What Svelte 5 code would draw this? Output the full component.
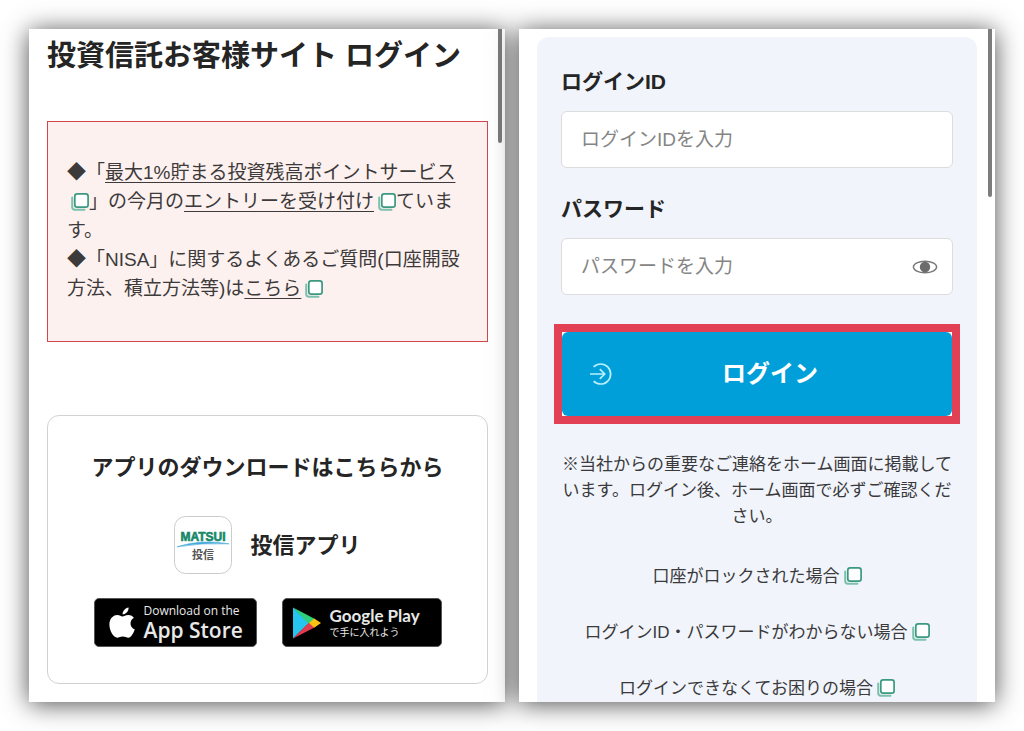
<script lang="ts">
  const helpLinks = [
    '口座がロックされた場合',
    'ログインID・パスワードがわからない場合',
    'ログインできなくてお困りの場合',
  ]

  let loginId = $state('')
  let password = $state('')
  let showPassword = $state(false)
</script>

{#snippet windowIcon()}
  <svg class="window-icon" viewBox="0 0 18 18" aria-hidden="true">
    <path d="M1.2 4.5v9.6q0 2.7 2.7 2.7h9.6" fill="none" stroke="#7cc0ae" stroke-width="2" stroke-linecap="round" />
    <rect x="3.8" y="0.9" width="13.300" height="13.300" rx="2.400" fill="#fff" stroke="#3a9980" stroke-width="1.700" />
  </svg>
{/snippet}

<main class="page">
  <section class="screen intro">
    <div class="scroll-thumb short"></div>
    <h1>投資信託お客様サイト ログイン</h1>

    <div class="notice">
      <p>
        ◆「<a href="#point">最大1%貯まる投資残高ポイントサービス</a>{@render windowIcon()}」の今月の<a href="#entry">エントリーを受け付け</a>{@render windowIcon()}ています。
      </p>
      <p>
        ◆「NISA」に関するよくあるご質問(口座開設方法、積立方法等)は<a href="#faq">こちら</a>{@render windowIcon()}
      </p>
    </div>

    <div class="app-card">
      <h2>アプリのダウンロードはこちらから</h2>
      <div class="app-name">
        <svg class="app-icon" viewBox="0 0 58 58" role="img" aria-label="MATSUI 投信">
          <rect x="0.5" y="0.5" width="57" height="57" rx="11" fill="#fff" stroke="#ccc" />
          <text class="brand" x="29" y="25" text-anchor="middle">MATSUI</text>
          <path d="M3 30.800Q27 22.800 55 27.800Q28 26.600 3 30.800Z" fill="#45a9dc" stroke="#45a9dc" stroke-width="0.600" />
          <text class="product" x="29" y="43" text-anchor="middle">投信</text>
        </svg>
        <span>投信アプリ</span>
      </div>

      <div class="stores">
        <a class="store apple" href="#appstore">
          <svg class="apple-logo" viewBox="0 0 26 32" aria-hidden="true">
            <path d="M19.600 0.500c.2 3.600-2.600 6.800-6 6.900C13.300 4.200 16.300 1 19.600.5Z" fill="#fff" />
            <path d="M13.400 9.400c1.600 0 3-1.500 5.900-1.500 2.500 0 4.500 1.300 5.600 2.900-5 3-4.200 9.700.9 11.700-1.200 3.300-3.600 8.200-6.500 8.200-2 0-2.800-1.200-5.500-1.200s-3.600 1.200-5.500 1.200C4.600 30.700.4 24 .4 17.600c0-6.300 4-9.600 7.900-9.600 2.400 0 4 1.400 5.100 1.400Z" fill="#fff" />
          </svg>
          <span class="store-text">
            <small>Download on the</small>
            <strong>App Store</strong>
          </span>
        </a>
        <a class="store google" href="#googleplay">
          <svg class="play-logo" viewBox="0 0 28 32" aria-hidden="true">
            <path d="M0 .5v31L16 16Z" fill="#25c5ee" />
            <path d="M0 .5 21.500 11.700 16 17Z" fill="#2fd07a" />
            <path d="M0 31.500 16 15.500l5.500 5Z" fill="#e23b4e" />
            <path d="M21.200 11.500 28 16l-6.800 4.800L16 16Z" fill="#fcc315" />
          </svg>
          <span class="store-text">
            <strong>Google Play</strong>
            <small>で手に入れよう</small>
          </span>
        </a>
      </div>
    </div>
  </section>

  <section class="screen login">
    <div class="scroll-thumb long"></div>
    <form class="login-card" onsubmit={(e) => e.preventDefault()}>
      <label for="login-id">ログインID</label>
      <div class="field">
        <input id="login-id" type="text" placeholder="ログインIDを入力" bind:value={loginId} />
      </div>

      <label for="password">パスワード</label>
      <div class="field">
        <input
          id="password"
          type={showPassword ? 'text' : 'password'}
          placeholder="パスワードを入力"
          bind:value={password}
        />
        <button
          class="eye"
          type="button"
          aria-label="パスワードを表示"
          onclick={() => (showPassword = !showPassword)}
        >
          <svg viewBox="0 0 26 14" aria-hidden="true">
            <ellipse cx="13" cy="7" rx="11.600" ry="5.800" fill="none" stroke="#777" stroke-width="1.400" />
            <circle cx="13" cy="7" r="5.200" fill="#6c6c6c" />
          </svg>
        </button>
      </div>

      <div class="highlight">
        <button class="submit" type="submit">
          <svg viewBox="0 0 24 24" aria-hidden="true">
            <path d="M4.600 4.900a10 10 0 1 1 0 14.200M1 12h14.500M10.800 7.200l4.900 4.800-4.900 4.800" fill="none" stroke="#b9f0fb" stroke-width="1.700" />
          </svg>
          <span>ログイン</span>
        </button>
      </div>

      <p class="remark">
        ※当社からの重要なご連絡をホーム画面に掲載しています。ログイン後、ホーム画面で必ずご確認ください。
      </p>

      <ul class="help">
        {#each helpLinks as text (text)}
          <li><a href="#help">{text}{@render windowIcon()}</a></li>
        {/each}
      </ul>
    </form>
  </section>
</main>

<style>
  :global(body) {
    background: #fff;
  }

  .page {
    display: grid;
    grid-template-columns: 1fr 1fr;
    gap: 14px;
    padding: 29px;
    color: #252525;
    font-family: 'Liberation Sans', 'Noto Sans CJK JP', sans-serif;
  }

  .screen {
    position: relative;
    background: #fff;
    box-shadow: 0 2px 24px rgba(0, 0, 0, 0.7);
  }

  .scroll-thumb {
    position: absolute;
    top: 0;
    right: 3px;
    width: 4px;
    border-radius: 0 0 2px 2px;
    background: #7c7c7c;
  }

  .short {
    height: 17%;
  }

  .long {
    height: 25%;
  }

  .intro {
    padding: 6px 17px 18px 18px;
  }

  h1,
  h2,
  p {
    margin: 0;
  }

  h1 {
    margin-bottom: 44px;
    font-size: 29px;
    line-height: 42px;
  }

  .notice {
    margin-bottom: 73px;
    padding: 36px 19px 38px;
    border: 1px solid #d0484b;
    background: #fdf1ef;
    color: #3c3a3a;
    font-size: 19px;
    line-height: 29px;
  }

  .notice a {
    color: inherit;
    text-underline-offset: 3px;
  }

  .window-icon {
    width: 18px;
    height: 18px;
    margin-left: 4px;
    vertical-align: -3px;
  }

  .app-card {
    display: flex;
    flex-direction: column;
    align-items: center;
    padding: 36px 16px;
    border: 1px solid #d2d2d2;
    border-radius: 12px;
  }

  h2 {
    margin-bottom: 32px;
    font-size: 22px;
    line-height: 32px;
  }

  .app-name {
    display: flex;
    align-items: center;
    gap: 18px;
    margin-bottom: 24px;
    font-size: 22px;
    font-weight: 700;
  }

  .app-name span {
    padding-bottom: 4px;
  }

  .app-icon {
    width: 58px;
    height: 58px;
  }

  .brand {
    fill: #16886a;
    stroke: #16886a;
    stroke-width: 0.6px;
    font-size: 12px;
    font-weight: 700;
  }

  .product {
    fill: #555;
    font-size: 11px;
    font-weight: 700;
  }

  .stores {
    display: flex;
    gap: 25px;
  }

  .store {
    display: flex;
    align-items: center;
    box-sizing: border-box;
    height: 49px;
    border: 1px solid #555;
    border-radius: 5px;
    background: #000;
    color: #e8e8e8;
    text-decoration: none;
    white-space: nowrap;
  }

  .apple {
    gap: 9px;
    width: 163px;
    padding-left: 14px;
  }

  .google {
    gap: 9px;
    width: 160px;
    padding-left: 10px;
  }

  .apple-logo {
    width: 26px;
    height: 32px;
  }

  .play-logo {
    width: 28px;
    height: 32px;
  }

  .store-text {
    display: flex;
    flex-direction: column;
  }

  .apple small {
    font: 12px/14px 'Open Sans', sans-serif;
  }

  .apple strong {
    font: 600 21px/24px 'Open Sans', sans-serif;
  }

  .google strong {
    font: 700 17px/20px Lato, sans-serif;
  }

  .google small {
    font-size: 10px;
    line-height: 14px;
  }

  .login {
    display: flex;
    padding: 8px 18px 0;
  }

  .login-card {
    flex: 1;
    padding: 30px 24px 0;
    border-radius: 12px 12px 0 0;
    background: #f1f4fa;
  }

  label {
    display: block;
    margin-bottom: 14px;
    font-size: 21px;
    font-weight: 700;
    line-height: 30px;
  }

  .field {
    display: flex;
    align-items: center;
    box-sizing: border-box;
    height: 57px;
    margin-bottom: 26px;
    border: 1px solid #dcdcdc;
    border-radius: 6px;
    background: #fff;
  }

  input {
    flex: 1;
    min-width: 0;
    padding: 0 19px;
    border: 0;
    outline: 0;
    background: none;
    color: inherit;
    font: inherit;
    font-size: 19px;
    line-height: 29px;
  }

  input::placeholder {
    color: #858585;
  }

  .eye {
    display: flex;
    margin-right: 14px;
    padding: 0;
    border: 0;
    background: none;
  }

  .eye svg {
    width: 26px;
    height: 14px;
  }

  .highlight {
    margin: 29px -7px 28px;
    border: 8px solid #e24055;
    background: #fff;
  }

  .submit {
    display: grid;
    grid-template-columns: 24px 1fr;
    align-items: center;
    width: 100%;
    height: 84px;
    padding: 0 25px 0 27px;
    border: 0;
    border-radius: 6px;
    background: #009fd9;
    color: #fff;
    font: inherit;
    font-size: 24px;
    font-weight: 700;
  }

  .submit svg {
    width: 24px;
    height: 24px;
  }

  .submit span {
    padding-bottom: 5px;
  }

  .remark,
  .help {
    color: #3a3a3c;
    font-size: 17px;
    line-height: 26px;
    text-align: center;
  }

  .help {
    display: flex;
    flex-direction: column;
    gap: 30px;
    margin: 34px 0 0;
    padding: 0;
    list-style: none;
  }

  .help a {
    color: inherit;
    text-decoration: none;
  }
</style>
